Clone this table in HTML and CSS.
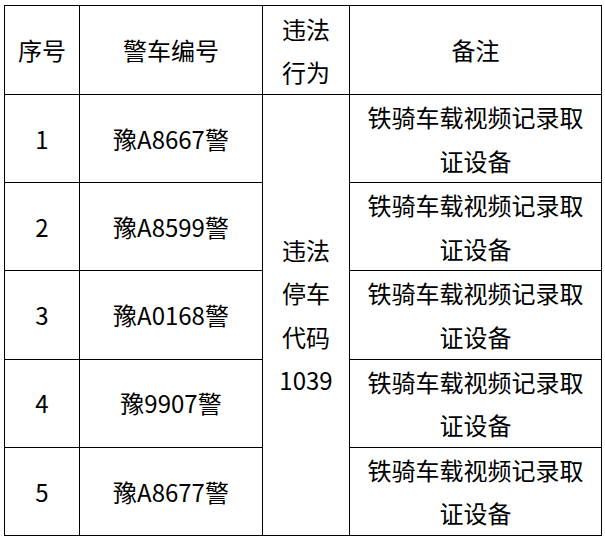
FILE: index.html
```html
<!DOCTYPE html>
<html lang="zh-CN">
<head>
<meta charset="utf-8">
<title>警车列表</title>
<link rel="stylesheet" href="styles.css">
</head>
<body>
<table class="grid">
  <colgroup>
    <col class="c-no">
    <col class="c-plate">
    <col class="c-act">
    <col class="c-note">
  </colgroup>
  <thead>
    <tr class="head">
      <th>序号</th>
      <th>警车编号</th>
      <th>违法行为</th>
      <th>备注</th>
    </tr>
  </thead>
  <tbody>
    <tr class="row">
      <td>1</td>
      <td>豫A8667警</td>
      <td rowspan="5">违法停车代码1039</td>
      <td>铁骑车载视频记录取证设备</td>
    </tr>
    <tr class="row">
      <td>2</td>
      <td>豫A8599警</td>
      <td>铁骑车载视频记录取证设备</td>
    </tr>
    <tr class="row">
      <td>3</td>
      <td>豫A0168警</td>
      <td>铁骑车载视频记录取证设备</td>
    </tr>
    <tr class="row">
      <td>4</td>
      <td>豫9907警</td>
      <td>铁骑车载视频记录取证设备</td>
    </tr>
    <tr class="row">
      <td>5</td>
      <td>豫A8677警</td>
      <td>铁骑车载视频记录取证设备</td>
    </tr>
  </tbody>
</table>
</body>
</html>
```

FILE: styles.css
```css
html, body {
  margin: 0;
  padding: 0;
  background: #ffffff;
}

body {
  padding: 5px 0 0 4px;
  font-family: "Noto Sans CJK SC", "Noto Sans", sans-serif;
  color: #000000;
}

.grid {
  border-collapse: collapse;
  table-layout: fixed;
  width: 597px;
  font-size: 24px;
  line-height: 43.5px;
}

.c-no { width: 75px; }
.c-plate { width: 183px; }
.c-act { width: 87px; }
.c-note { width: 252px; }

.grid th,
.grid td {
  border: 1px solid #000000;
  padding: 0 8px;
  text-align: center;
  vertical-align: middle;
  font-weight: 400;
}

.head {
  height: 89px;
}

.row {
  height: 88.2px;
}
```
